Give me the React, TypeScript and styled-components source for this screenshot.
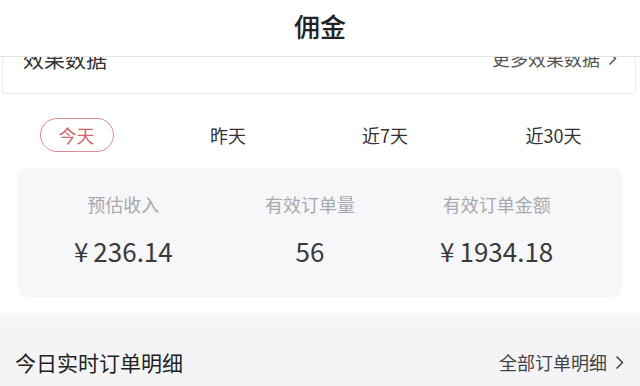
import React from "react";
import styled, { createGlobalStyle } from "styled-components";

const GlobalStyle = createGlobalStyle`
    html, body {
        margin: 0;
        padding: 0;
        background: #fff;
        font-family: "Noto Sans CJK SC", "Noto Sans", sans-serif;
        color: #333;
    }
`;

const Header = styled.header`
    position: fixed;
    top: 0;
    left: 0;
    right: 0;
    height: 57px;
    display: flex;
    align-items: center;
    justify-content: center;
    padding-bottom: 6px;
    box-sizing: border-box;
    background: #fff;
    border-bottom: 1px solid #e4e4e4;
    z-index: 10;
`;

const Title = styled.h1`
    margin: 0;
    font-size: 26px;
    font-weight: 500;
    color: #222;
`;

const Page = styled.main`
    padding-top: 30px;
`;

const TopCard = styled.section`
    margin: 0 4px 0 2px;
    padding: 17px 18px 24px 20px;
    display: flex;
    align-items: center;
    justify-content: space-between;
    border: 1px solid #ececec;
    border-top: none;
    border-radius: 0 0 4px 4px;
`;

const CardTitle = styled.span`
    font-size: 21px;
    line-height: 22px;
    color: #333;
`;

const MoreLink = styled.span<{ $size: number; $color: string }>`
    display: flex;
    align-items: center;
    gap: 8px;
    font-size: ${({ $size }) => $size}px;
    line-height: 22px;
    color: ${({ $color }) => $color};
`;

const Tabs = styled.nav`
    margin-top: 24px;
    display: grid;
    grid-template-columns: 153px 150px 164px 1fr;
    align-items: center;
    justify-items: center;
`;

const Tab = styled.span<{ $active?: boolean }>`
    display: flex;
    align-items: center;
    justify-content: center;
    box-sizing: border-box;
    height: 34px;
    padding: 0 18px;
    font-size: 18px;
    color: ${({ $active }) => ($active ? "#c8676c" : "#333")};
    border: ${({ $active }) => ($active ? "1.5px solid #d98b90" : "1.5px solid transparent")};
    border-radius: 17px;
`;

const StatsCard = styled.section`
    margin: 16px 18px 0;
    height: 129px;
    box-sizing: border-box;
    padding: 23px 32px 0 12px;
    display: grid;
    grid-template-columns: repeat(3, 1fr);
    background: #f7f7f9;
    border-radius: 8px;
`;

const Stat = styled.div`
    display: flex;
    flex-direction: column;
    align-items: center;
    gap: 16px;
`;

const StatLabel = styled.span`
    font-size: 18px;
    line-height: 26px;
    color: #a9a9ad;
`;

const StatValue = styled.span`
    font-size: 26px;
    line-height: 36px;
    color: #3a3a3a;
`;

const Currency = styled.span`
    margin-right: 5px;
`;

const OrderSection = styled.section`
    margin-top: 16px;
    padding: 34px 16px 22px 15px;
    background: linear-gradient(#f9f9fb, #f4f4f7 14px);
    display: flex;
    align-items: center;
    justify-content: space-between;
`;

const SectionTitle = styled.span`
    font-size: 21px;
    line-height: 30px;
    color: #222;
`;

const Chevron = ({ color }: { color: string }) => (
    <svg width="9" height="15" viewBox="0 0 9 15">
        <polyline points="1.5,1.5 7.5,7.5 1.5,13.5" fill="none" stroke={color} strokeWidth="1.5" />
    </svg>
);

const tabs = ["今天", "昨天", "近7天", "近30天"];

const stats = [
    { label: "预估收入", currency: true, value: "236.14" },
    { label: "有效订单量", currency: false, value: "56" },
    { label: "有效订单金额", currency: true, value: "1934.18" },
];

export default function App() {
    return (
        <>
            <GlobalStyle />
            <Header>
                <Title>佣金</Title>
            </Header>
            <Page>
                <TopCard>
                    <CardTitle>效果数据</CardTitle>
                    <MoreLink $size={18} $color="#555">
                        更多效果数据
                        <Chevron color="#555" />
                    </MoreLink>
                </TopCard>
                <Tabs>
                    {tabs.map((t, i) => (
                        <Tab key={t} $active={i === 0}>
                            {t}
                        </Tab>
                    ))}
                </Tabs>
                <StatsCard>
                    {stats.map((s) => (
                        <Stat key={s.label}>
                            <StatLabel>{s.label}</StatLabel>
                            <StatValue>
                                {s.currency && <Currency>¥</Currency>}
                                {s.value}
                            </StatValue>
                        </Stat>
                    ))}
                </StatsCard>
                <OrderSection>
                    <SectionTitle>今日实时订单明细</SectionTitle>
                    <MoreLink $size={18} $color="#444">
                        全部订单明细
                        <Chevron color="#444" />
                    </MoreLink>
                </OrderSection>
            </Page>
        </>
    );
}
